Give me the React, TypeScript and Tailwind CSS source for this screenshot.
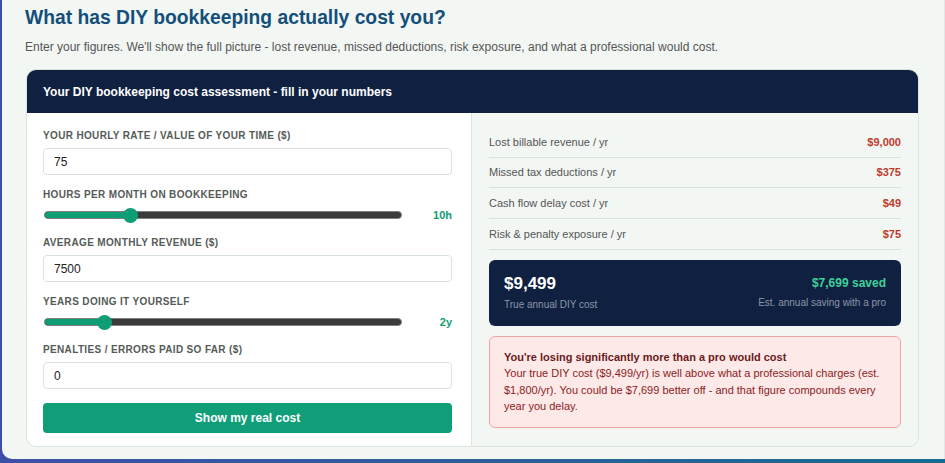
const font = "font-['Liberation_Sans',Arial,sans-serif]";

type Field =
  | { kind: "input"; label: string; value: string }
  | { kind: "range"; label: string; value: number; min: number; max: number; unit: string };

const fields: Field[] = [
  { kind: "input", label: "Your hourly rate / value of your time ($)", value: "75" },
  { kind: "range", label: "Hours per month on bookkeeping", value: 10, min: 1, max: 40, unit: "h" },
  { kind: "input", label: "Average monthly revenue ($)", value: "7500" },
  { kind: "range", label: "Years doing it yourself", value: 2, min: 1, max: 7.4, unit: "y" },
  { kind: "input", label: "Penalties / errors paid so far ($)", value: "0" },
];

const breakdown = [
  { label: "Lost billable revenue / yr", value: "$9,000" },
  { label: "Missed tax deductions / yr", value: "$375" },
  { label: "Cash flow delay cost / yr", value: "$49" },
  { label: "Risk & penalty exposure / yr", value: "$75" },
];

function Slider({ value, min, max, unit }: { value: number; min: number; max: number; unit: string }) {
  const pct = (value - min) / (max - min);
  // thumb centre travels between 7px and (width - 7px), like a native range input
  const pos = `calc(7px + (100% - 14px) * ${pct})`;
  return (
    <div className="flex items-center h-[16px]">
      <div className="relative w-[358px] h-[16px] ml-[1px]">
        <div className="absolute left-0 right-0 top-[4px] h-[8px] rounded-full bg-[#3b3b3b] border border-[#808080] overflow-hidden">
          <div className="h-full bg-[#0f9d76]" style={{ width: pos }} />
        </div>
        <div
          className="absolute top-[1px] w-[15px] h-[15px] -ml-[7.5px] rounded-full bg-[#0f9d76]"
          style={{ left: pos }}
        />
      </div>
      <span className="ml-auto text-[11px] font-bold text-[#129c74]">
        {value}
        {unit}
      </span>
    </div>
  );
}

export default function App() {
  return (
    <div className={`${font} h-[463px] bg-gradient-to-r from-[#3c4fa7] to-[#156c90] pl-[2px] pb-[4px]`}>
      <div className="h-full bg-[#f2f7f4] rounded-bl-[10px] border-r border-[#e2e8e5] pl-[23px] pt-[6px]">
        <h1 className="text-[19.3px] font-bold text-[#144f7b] leading-[24px]">
          What has DIY bookkeeping actually cost you?
        </h1>
        <p className="mt-[9px] text-[12px] text-[#555] leading-[16px]">
          Enter your figures. We'll show the full picture - lost revenue, missed deductions, risk exposure, and
          what a professional would cost.
        </p>

        <div className="mt-[14px] ml-[1px] w-[893px] rounded-[10px] border border-[#dbe5de] overflow-hidden">
          <div className="h-[43px] bg-[#0f2041] flex items-center px-[16px]">
            <span className="text-[12px] font-bold text-white">
              Your DIY bookkeeping cost assessment - fill in your numbers
            </span>
          </div>

          <div className="grid grid-cols-[444px_1fr]">
            <div className="bg-white pl-[16px] pr-[19px] pt-[17px] pb-[12px] flex flex-col gap-[14px]">
              {fields.map((f) => (
                <div key={f.label}>
                  <div className="text-[10px] font-bold uppercase tracking-[0.35px] text-[#555b57] leading-[12px] mb-[6px]">
                    {f.label}
                  </div>
                  {f.kind === "input" ? (
                    <div className="h-[27px] rounded-[4px] border border-[#d9e4dd] flex items-center px-[10px] text-[12px] text-[#222]">
                      {f.value}
                    </div>
                  ) : (
                    <Slider value={f.value} min={f.min} max={f.max} unit={f.unit} />
                  )}
                </div>
              ))}
              <button className="h-[30px] rounded-[4px] bg-[#0f9e78] text-white text-[12px] font-bold">
                Show my real cost
              </button>
            </div>

            <div className="bg-[#f2f7f3] border-l border-[#dbe5de] px-[17px] pt-[14px] pb-[18px]">
              {breakdown.map((r) => (
                <div
                  key={r.label}
                  className="h-[30.7px] border-b border-[#dbe3dd] flex items-center justify-between text-[11px]"
                >
                  <span className="text-[#555]">{r.label}</span>
                  <span className="font-bold text-[#c0392b]">{r.value}</span>
                </div>
              ))}

              <div className="mt-[10px] h-[66px] rounded-[6px] bg-[#0f2041] px-[15px] flex items-center justify-between">
                <div>
                  <div className="text-[17px] font-bold text-white leading-[20px]">$9,499</div>
                  <div className="mt-[3px] text-[10px] text-[#8d96a8]">True annual DIY cost</div>
                </div>
                <div className="text-right">
                  <div className="text-[12px] font-bold text-[#3ed19a] leading-[16px]">$7,699 saved</div>
                  <div className="mt-[4px] text-[10px] text-[#8d96a8]">Est. annual saving with a pro</div>
                </div>
              </div>

              <div className="mt-[10px] rounded-[6px] border border-[#f2a3a3] bg-[#fee9e9] px-[14px] pt-[12px] pb-[12px] text-[11px] leading-[16.5px]">
                <div className="font-bold text-[#6b1a1a]">You're losing significantly more than a pro would cost</div>
                <div className="text-[#8b2222]">
                  Your true DIY cost ($9,499/yr) is well above what a professional charges (est. $1,800/yr). You
                  could be $7,699 better off - and that figure compounds every year you delay.
                </div>
              </div>
            </div>
          </div>
        </div>
      </div>
    </div>
  );
}
